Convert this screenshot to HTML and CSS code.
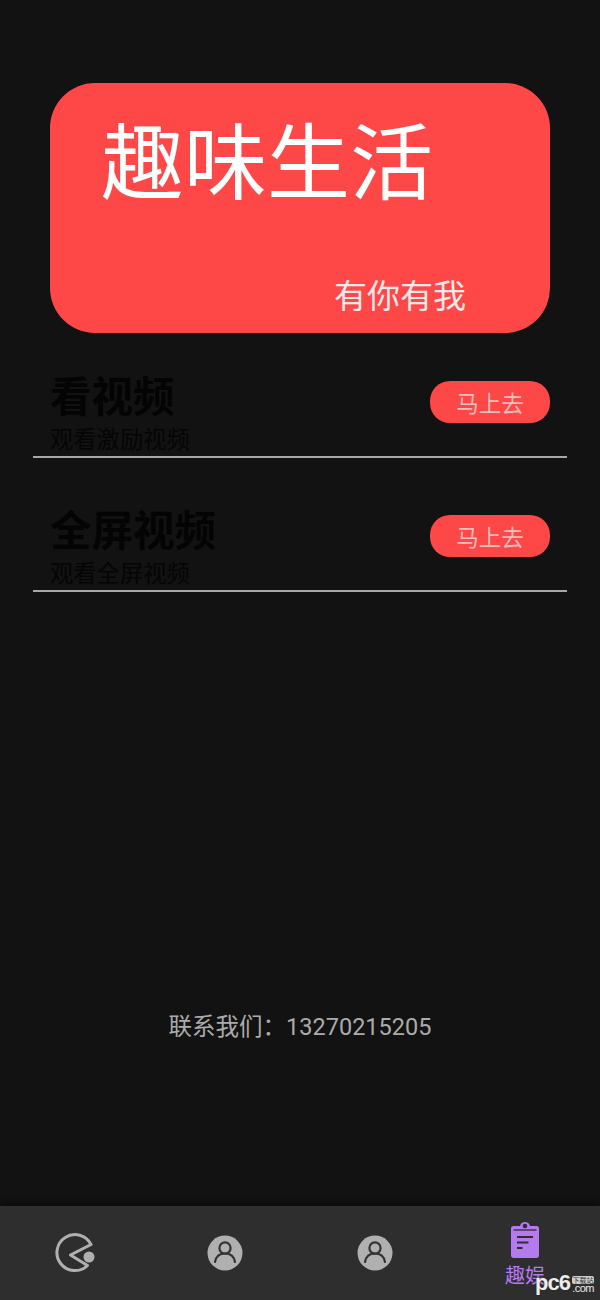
FILE: index.html
```html
<!DOCTYPE html>
<html lang="zh-CN">
<head>
  <meta charset="UTF-8" />
  <meta name="viewport" content="width=device-width, initial-scale=1.0" />
  <title>趣味生活</title>
  <link rel="stylesheet" href="styles.css">
</head>
<body>
  <main class="content">
    <div class="banner">
      <div class="banner-title">趣味生活</div>
      <div class="banner-sub">有你有我</div>
    </div>

    <div class="task">
      <div class="task-text">
        <div class="task-name">看视频</div>
        <div class="task-desc">观看激励视频</div>
      </div>
      <button class="go-btn">马上去</button>
    </div>
    <div class="task">
      <div class="task-text">
        <div class="task-name">全屏视频</div>
        <div class="task-desc">观看全屏视频</div>
      </div>
      <button class="go-btn">马上去</button>
    </div>

    <div class="contact">联系我们：13270215205</div>
  </main>

  <nav class="tabbar">
    <div class="tab">
      <svg width="42" height="42" viewBox="0 0 42 42">
        <path d="M37 12.500 A18 18 0 1 0 33.500 33.500 L16.500 23 Z" fill="none" stroke="#b0b0b0" stroke-width="3" stroke-linejoin="round"/>
        <circle cx="35" cy="25" r="5.500" fill="#b0b0b0"/>
      </svg>
    </div>
    <div class="tab">
      <svg width="36" height="36" viewBox="0 0 36 36">
        <circle cx="18" cy="18" r="17.500" fill="#b0b0b0"/>
        <circle cx="18" cy="13" r="5.600" fill="none" stroke="#333" stroke-width="2.200"/>
        <path d="M8 27 C9 21 13 18.500 18 18.500 C23 18.500 27 21 28 27" fill="none" stroke="#333" stroke-width="2.200" stroke-linecap="round"/>
      </svg>
    </div>
    <div class="tab">
      <svg width="36" height="36" viewBox="0 0 36 36">
        <circle cx="18" cy="18" r="17.500" fill="#b0b0b0"/>
        <circle cx="18" cy="13" r="5.600" fill="none" stroke="#333" stroke-width="2.200"/>
        <path d="M8 27 C9 21 13 18.500 18 18.500 C23 18.500 27 21 28 27" fill="none" stroke="#333" stroke-width="2.200" stroke-linecap="round"/>
      </svg>
    </div>
    <div class="tab tab-active">
      <svg width="28" height="36" viewBox="0 0 28 36">
        <path d="M2.500 4 H9 C9.500 1.500 11.500 0 14 0 C16.500 0 18.500 1.500 19 4 H25.500 C27 4 28 5 28 6.500 V33.500 C28 35 27 36 25.500 36 H2.500 C1 36 0 35 0 33.500 V6.500 C0 5 1 4 2.500 4 Z" fill="#b57bee"/>
        <path d="M2.500 8 H25.500" stroke="#2e2e2e" stroke-width="1.300"/>
        <circle cx="14" cy="4" r="2.300" fill="#2e2e2e"/>
        <path d="M6 15 H22 M6 20.500 H17.500 M6 26 H11.500" stroke="#2e2e2e" stroke-width="1.800" fill="none"/>
      </svg>
      <span class="tab-label">趣娱</span>
    </div>
    <div class="watermark"><span class="wm-logo">pc6</span><span class="wm-side"><span class="wm-tag">下载站</span><span class="wm-com">.com</span></span></div>
  </nav>
</body>
</html>
```

FILE: styles.css
```css
body {
  margin: 0;
  height: 1300px;
  overflow: hidden;
  display: flex;
  flex-direction: column;
  background: #121212;
  font-family: "Noto Sans CJK SC", "Noto Sans", sans-serif;
}

.content {
  flex: 1;
  display: flex;
  flex-direction: column;
  padding-top: 83px;
}

.banner {
  height: 250px;
  margin: 0 50px 33px;
  box-sizing: border-box;
  padding: 24px 84px 14px 51px;
  display: flex;
  flex-direction: column;
  justify-content: space-between;
  background: #fe4747;
  border-radius: 45px;
  color: #fff;
}

.banner-title {
  font-size: 83px;
  line-height: 100px;
}

.banner-sub {
  font-size: 33px;
  line-height: 50px;
  text-align: right;
  color: #fbe9e9;
}

.task {
  display: flex;
  align-items: flex-start;
  justify-content: space-between;
  margin: 0 33px 42px;
  padding: 0 17px;
  height: 90px;
  border-bottom: 2px solid #a8a8a8;
}

.task-name {
  margin-top: 6px;
  font-size: 41.500px;
  line-height: 44px;
  font-weight: 700;
  color: #040404;
}

.task-desc {
  margin-top: 8px;
  font-size: 23.300px;
  line-height: 28px;
  color: #050505;
}

.go-btn {
  width: 120px;
  height: 42px;
  margin-top: 15px;
  padding: 0;
  border: none;
  border-radius: 20px;
  background: #fe4747;
  color: #f7bcbc;
  font-family: inherit;
  font-size: 22.500px;
}

.contact {
  margin-top: 377px;
  text-align: center;
  font-family: Roboto, "Noto Sans CJK SC", sans-serif;
  font-size: 23.500px;
  line-height: 32px;
  color: #ababab;
}

.tabbar {
  position: relative;
  height: 94px;
  display: flex;
  background: #2e2e2e;
  box-shadow: 0 -5px 6px #0d0d0d;
}

.tab {
  flex: 1;
  display: flex;
  flex-direction: column;
  align-items: center;
  justify-content: center;
}

.tab-active {
  justify-content: flex-start;
  padding-top: 16px;
}

.tab-label {
  margin-top: 3px;
  font-size: 20px;
  line-height: 28px;
  color: #b57bee;
}

.watermark {
  position: absolute;
  right: 6px;
  bottom: 7px;
  display: flex;
  align-items: flex-end;
  gap: 2px;
  color: #ececec;
  font-family: "Liberation Sans", sans-serif;
}

.wm-logo {
  font-size: 22px;
  line-height: 20px;
  letter-spacing: -1px;
  font-weight: 700;
  text-shadow: 0 0 2px #222;
}

.wm-side {
  display: flex;
  flex-direction: column;
  align-items: flex-end;
}

.wm-tag {
  font-family: "Noto Sans CJK SC", sans-serif;
  font-size: 7px;
  line-height: 8px;
  width: 22px;
  text-align: center;
  background: #cfcfcf;
  color: #333;
  border-radius: 2px;
}

.wm-com {
  font-size: 11px;
  line-height: 9px;
  letter-spacing: -.5px;
}
```
